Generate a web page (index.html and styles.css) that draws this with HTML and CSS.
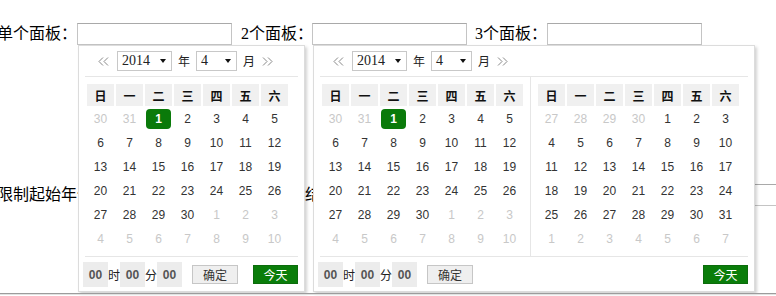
FILE: index.html
```html
<!DOCTYPE html>
<html lang="zh-CN">
<head>
<meta charset="utf-8">
<title>日期面板</title>
<link rel="stylesheet" href="styles.css">
</head>
<body>
<div class="page">
  <div class="row r1">
    <span class="lbl lbl-a">单个面板：</span>
    <span class="field">
      <input class="ipt" type="text">
      <div class="dp dp-one">
        <div class="dp-head">
          <svg class="arr" width="11" height="9" viewBox="0 0 11 9"><path d="M5 0.5 L1 4.5 L5 8.5 M10 0.5 L6 4.5 L10 8.5" fill="none" stroke="#888" stroke-width="1"/></svg>
          <span class="sel sel-y">2014<i class="tri"></i></span>
          <span class="hz">年</span>
          <span class="sel sel-m">4<i class="tri"></i></span>
          <span class="hz">月</span>
          <svg class="arr" width="11" height="9" viewBox="0 0 11 9"><path d="M1 0.5 L5 4.5 L1 8.5 M6 0.5 L10 4.5 L6 8.5" fill="none" stroke="#888" stroke-width="1"/></svg>
        </div>
        <div class="dp-body">
          <div class="panel panel-single">
            <div class="days">
              <b>日</b><b>一</b><b>二</b><b>三</b><b>四</b><b>五</b><b>六</b>
              <span class="o">30</span><span class="o">31</span><span class="on"><em>1</em></span><span>2</span><span>3</span><span>4</span><span>5</span>
              <span>6</span><span>7</span><span>8</span><span>9</span><span>10</span><span>11</span><span>12</span>
              <span>13</span><span>14</span><span>15</span><span>16</span><span>17</span><span>18</span><span>19</span>
              <span>20</span><span>21</span><span>22</span><span>23</span><span>24</span><span>25</span><span>26</span>
              <span>27</span><span>28</span><span>29</span><span>30</span><span class="o">1</span><span class="o">2</span><span class="o">3</span>
              <span class="o">4</span><span class="o">5</span><span class="o">6</span><span class="o">7</span><span class="o">8</span><span class="o">9</span><span class="o">10</span>
            </div>
          </div>
        </div>
        <div class="dp-foot">
          <span class="tbox">00</span><span class="tu">时</span><span class="tbox">00</span><span class="tu">分</span><span class="tbox">00</span>
          <span class="btn ok">确定</span>
          <span class="btn today">今天</span>
        </div>
      </div>
    </span>
    <span class="lbl lbl-b">2个面板：</span>
    <span class="field">
      <input class="ipt" type="text">
      <div class="dp dp-two">
        <div class="dp-head">
          <svg class="arr" width="11" height="9" viewBox="0 0 11 9"><path d="M5 0.5 L1 4.5 L5 8.5 M10 0.5 L6 4.5 L10 8.5" fill="none" stroke="#888" stroke-width="1"/></svg>
          <span class="sel sel-y">2014<i class="tri"></i></span>
          <span class="hz">年</span>
          <span class="sel sel-m">4<i class="tri"></i></span>
          <span class="hz">月</span>
          <svg class="arr" width="11" height="9" viewBox="0 0 11 9"><path d="M1 0.5 L5 4.5 L1 8.5 M6 0.5 L10 4.5 L6 8.5" fill="none" stroke="#888" stroke-width="1"/></svg>
        </div>
        <div class="dp-body">
          <div class="panel panel-left">
            <div class="days">
              <b>日</b><b>一</b><b>二</b><b>三</b><b>四</b><b>五</b><b>六</b>
              <span class="o">30</span><span class="o">31</span><span class="on"><em>1</em></span><span>2</span><span>3</span><span>4</span><span>5</span>
              <span>6</span><span>7</span><span>8</span><span>9</span><span>10</span><span>11</span><span>12</span>
              <span>13</span><span>14</span><span>15</span><span>16</span><span>17</span><span>18</span><span>19</span>
              <span>20</span><span>21</span><span>22</span><span>23</span><span>24</span><span>25</span><span>26</span>
              <span>27</span><span>28</span><span>29</span><span>30</span><span class="o">1</span><span class="o">2</span><span class="o">3</span>
              <span class="o">4</span><span class="o">5</span><span class="o">6</span><span class="o">7</span><span class="o">8</span><span class="o">9</span><span class="o">10</span>
            </div>
          </div>
          <div class="panel panel-right">
            <div class="days">
              <b>日</b><b>一</b><b>二</b><b>三</b><b>四</b><b>五</b><b>六</b>
              <span class="o">27</span><span class="o">28</span><span class="o">29</span><span class="o">30</span><span>1</span><span>2</span><span>3</span>
              <span>4</span><span>5</span><span>6</span><span>7</span><span>8</span><span>9</span><span>10</span>
              <span>11</span><span>12</span><span>13</span><span>14</span><span>15</span><span>16</span><span>17</span>
              <span>18</span><span>19</span><span>20</span><span>21</span><span>22</span><span>23</span><span>24</span>
              <span>25</span><span>26</span><span>27</span><span>28</span><span>29</span><span>30</span><span>31</span>
              <span class="o">1</span><span class="o">2</span><span class="o">3</span><span class="o">4</span><span class="o">5</span><span class="o">6</span><span class="o">7</span>
            </div>
          </div>
        </div>
        <div class="dp-foot">
          <span class="tbox">00</span><span class="tu">时</span><span class="tbox">00</span><span class="tu">分</span><span class="tbox">00</span>
          <span class="btn ok">确定</span>
          <span class="btn today">今天</span>
        </div>
      </div>
    </span>
    <span class="lbl lbl-c">3个面板：</span>
    <span class="field"><input class="ipt" type="text"></span>
  </div>

  <div class="row r2">
    <span class="lbl lbl-d">限制起始年份：</span>
    <span class="field"><input class="ipt" type="text"></span>
    <span class="lbl lbl-e">结束年份：</span>
    <span class="field"><input class="ipt" type="text"></span>
    <span class="lbl lbl-f">限制月份：</span>
    <span class="field"><input class="ipt ipt-wide" type="text"></span>
  </div>

  <div class="rule"></div>
</div>
</body>
</html>
```

FILE: styles.css
```css
html, body {
  margin: 0;
  padding: 0;
  background: #fff;
  overflow: hidden;
}
body {
  width: 776px;
  height: 296px;
  font-family: "Liberation Serif", "Noto Sans CJK SC", serif;
  font-size: 16px;
  color: #000;
}
.page {
  position: relative;
  height: 296px;
  overflow: hidden;
}
.row {
  display: flex;
  align-items: center;
  height: 22px;
  white-space: nowrap;
  margin-left: -3px;
}
.r1 { margin-top: 23px; }
.r2 { margin-top: 139px; }

.lbl {
  display: inline-block;
  line-height: 22px;
  flex: none;
}
.lbl-a { width: 80px; }
.lbl-b { width: 71px; margin-left: 9px; }
.lbl-c { width: 72px; margin-left: 8px; }
.lbl-d { width: 112px; }
.lbl-e { width: 80px; margin-left: 41px; }
.lbl-f { width: 80px; margin-left: 8px; }

.field {
  position: relative;
  flex: none;
  display: block;
  height: 22px;
}
.ipt {
  box-sizing: border-box;
  width: 155px;
  height: 22px;
  margin: 0;
  padding: 0 3px;
  border: 1px solid #c4c4c4;
  border-top-color: #a9a9a9;
  background: #fff;
  display: block;
  outline: none;
}
.ipt-wide { width: 220px; }

/* ---------- date picker ---------- */
.dp {
  position: absolute;
  top: 22px;
  left: 1px;
  z-index: 5;
  background: #fff;
  border: 1px solid #dcdcdc;
  box-shadow: 2px 2px 3px rgba(0, 0, 0, 0.18);
  font-family: "Liberation Sans", "Noto Sans CJK SC", sans-serif;
  color: #333;
}
.dp-one { width: 225px; }
.dp-two { width: 440px; }

.dp-head {
  display: flex;
  align-items: center;
  height: 30px;
  margin: 0 6px;
  padding-left: 13px;
  border-bottom: 1px solid #e6e6e6;
}
.arr { display: block; flex: none; }
.sel {
  position: relative;
  box-sizing: border-box;
  height: 20px;
  border: 1px solid #c8c8c8;
  font-family: "Liberation Serif", serif;
  font-size: 14px;
  line-height: 18px;
  color: #222;
  padding-left: 4px;
  margin-left: 8px;
}
.sel-y { width: 55px; }
.sel-m { width: 41px; }
.tri {
  position: absolute;
  right: 5px;
  top: 7px;
  width: 0;
  height: 0;
  border-left: 3.5px solid transparent;
  border-right: 3.5px solid transparent;
  border-top: 4px solid #111;
}
.hz {
  font-family: "Noto Sans CJK SC", sans-serif;
  font-size: 12px;
  color: #222;
  margin-left: 6px;
  line-height: 20px;
}
.hz + .arr { margin-left: 7px; }
.hz + .sel { margin-left: 6px; }

.dp-body {
  display: flex;
  margin: 0 6px;
  padding: 7px 0 6px;
  border-bottom: 1px solid #e6e6e6;
}
.panel { padding-left: 2px; }
.panel-single { padding-right: 10px; }
.panel-left {
  padding-right: 8px;
  border-right: 1px solid #e6e6e6;
  margin-top: -7px;
  padding-top: 7px;
  margin-bottom: -6px;
  padding-bottom: 6px;
}
.panel-right { padding-left: 7px; }

.days {
  display: grid;
  grid-template-columns: repeat(7, 27px);
  grid-template-rows: 22px repeat(6, 24px);
  column-gap: 2px;
  row-gap: 0;
  width: 200px;
}
.days b {
  display: flex;
  align-items: center;
  justify-content: center;
  background: #f0f0f0;
  font-family: "Noto Sans CJK SC", sans-serif;
  font-size: 12px;
  font-weight: 700;
  color: #111;
  margin-bottom: 1px;
}
.days b { height: 22px; }
.days span {
  display: flex;
  align-items: center;
  justify-content: center;
  font-size: 12px;
  color: #333;
}
.days b ~ span:nth-child(n+8) { margin-top: 1px; }
.days span.o { color: #c8c8c8; }
.days span.on em {
  display: flex;
  align-items: center;
  justify-content: center;
  width: 25px;
  height: 20px;
  border-radius: 4px;
  background: #0a7a0a;
  color: #fff;
  font-style: normal;
  font-weight: 700;
}

.dp-foot {
  display: flex;
  align-items: center;
  padding: 5px 6px 4px 4px;
}
.tbox {
  width: 25px;
  height: 25px;
  background: #ececec;
  color: #555;
  font-size: 12px;
  font-weight: 700;
  display: flex;
  align-items: center;
  justify-content: center;
}
.tu {
  width: 12px;
  font-family: "Noto Sans CJK SC", sans-serif;
  font-size: 12px;
  color: #222;
  text-align: center;
}
.btn {
  box-sizing: border-box;
  height: 19px;
  display: flex;
  align-items: center;
  justify-content: center;
  font-family: "Noto Sans CJK SC", sans-serif;
  font-size: 12px;
}
.ok {
  width: 46px;
  margin-left: 10px;
  background: #efefef;
  border: 1px solid #c6c6c6;
  color: #333;
}
.today {
  width: 45px;
  margin-left: auto;
  background: #0a7d0a;
  border: 1px solid #0c6c0c;
  color: #fff;
}

.rule {
  position: absolute;
  left: 0;
  right: 0;
  top: 293px;
  height: 0;
  border-top: 1px solid #9c9c9c;
  border-bottom: 1px solid #e2e2e2;
  z-index: 10;
}
```
